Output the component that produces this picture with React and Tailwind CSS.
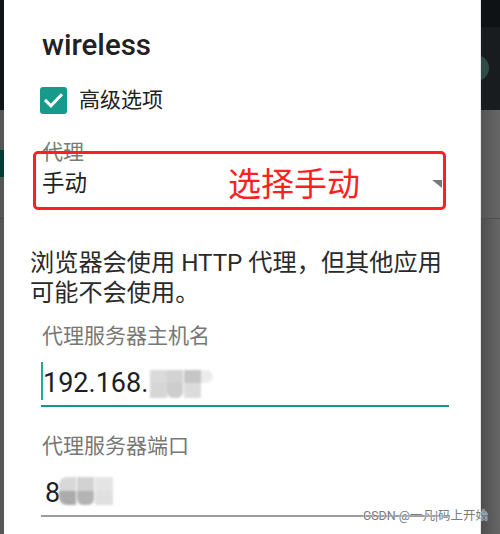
import React from "react";

const cjk = { fontFamily: 'Roboto, "Noto Sans CJK SC", sans-serif' };

export default function App() {
  return (
    <div className="relative flex h-[534px] w-[500px] overflow-hidden bg-white" style={cjk}>
      {/* left edge of the underlying screen */}
      <div className="flex w-[4px] flex-col">
        <div className="h-[110px] bg-[#111417]" />
        <div className="h-[40px] bg-[#565656]" />
        <div className="h-[27px] bg-[#003c35]" />
        <div className="h-[41px] bg-[#565656]" />
        <div className="h-[1px] bg-[#4a4a4a]" />
        <div className="flex-1 bg-[#565656]" />
      </div>

      {/* dialog */}
      <div className="relative flex w-[476px] flex-col bg-white">
        <div className="mt-[31px] pl-[38px] text-[29.5px] font-medium leading-[28px] text-[#212121]">wireless</div>

        <div className="mt-[28px] flex h-[27px] items-center pl-[36px]">
          <div className="flex h-[27px] w-[27px] items-center justify-center rounded-[3px] bg-[#17998b]">
            <svg width="21" height="21" viewBox="0 0 24 24" fill="none">
              <path d="M3.5 12.5l5.5 5.5L20.5 6" stroke="white" strokeWidth="3.4" strokeLinecap="square" />
            </svg>
          </div>
          <span className="ml-[12px] text-[21px] leading-[21px] text-[#222]">高级选项</span>
        </div>

        <div className="mt-[28px] pl-[38px] text-[21px] leading-[21px] text-[#7a7a7a]">代理</div>
        <div className="mt-[9px] flex items-center justify-between pl-[38px] pr-[38px]">
          <span className="text-[22.5px] leading-[22px] text-[#222]">手动</span>
          <svg width="10" height="8" viewBox="0 0 10 8" className="mt-[2px]">
            <path d="M0 0H10V0L10 8Z" fill="#7a7a7a" />
          </svg>
        </div>

        <p className="mt-[54px] w-[450px] pl-[26px] text-[24.2px] leading-[30px] text-[#2a2a2a]">
          浏览器会使用 HTTP 代理，但其他应用可能不会使用。
        </p>

        <div className="mt-[18px] pl-[38px] text-[21px] leading-[21px] text-[#777]">代理服务器主机名</div>
        <div className="relative ml-[37px] mt-[13px] flex h-[47px] w-[408px] items-start border-b-[2px] border-[#12998a]">
          <div className="mt-[2px] h-[38px] w-[2px] bg-[#2aa596]" />
          <span className="mt-[10px] text-[27px] leading-[27px] text-[#1e1e1e]">192.168.</span>
          <div className="absolute left-[109px] top-[10px] grid grid-cols-4 blur-[1px]">
            <div className="h-[13px] w-[17px] bg-[#dadada]" />
            <div className="h-[13px] w-[16px] bg-[#d2d2d2]" />
            <div className="h-[13px] w-[17px] bg-[#c6c6c6]" />
            <div className="h-[13px] w-[12px] rounded-r-full bg-[#ececec]" />
            <div className="h-[15px] w-[17px] bg-[#d6d6d6]" />
            <div className="h-[15px] w-[16px] rounded-b-[6px] bg-[#cdcdcd]" />
            <div className="h-[15px] w-[17px] bg-[#dcdcdc]" />
            <div className="h-[15px] w-[12px] bg-transparent" />
          </div>
        </div>

        <div className="mt-[29px] pl-[38px] text-[21px] leading-[21px] text-[#777]">代理服务器端口</div>
        <div className="relative ml-[37px] mt-[23px] flex h-[37px] w-[408px] items-start border-b-[2px] border-[#9c9c9c]">
          <span className="pl-[4px] text-[27px] leading-[27px] text-[#1e1e1e]">8</span>
          <div className="absolute left-[18px] top-[-3px] grid grid-cols-3 blur-[0.8px]">
            <div className="h-[14px] w-[17px] rounded-tl-[8px] bg-[#d8d8d8]" />
            <div className="h-[14px] w-[17px] bg-[#d2d2d2]" />
            <div className="h-[14px] w-[18px] bg-[#e4e4e4]" />
            <div className="h-[14px] w-[17px] rounded-bl-[8px] bg-[#ababab]" />
            <div className="h-[14px] w-[17px] rounded-b-[6px] bg-[#b4b4b4]" />
            <div className="h-[14px] w-[18px] bg-[#e0e0e0]" />
          </div>
        </div>

        {/* annotation */}
        <div className="absolute left-[29px] top-[151px] h-[59px] w-[413px] rounded-[5px] border-[3px] border-[#ff2121]" />
        <div className="absolute left-[224px] top-[166px] text-[33px] leading-[38px] text-[#ff2121]">选择手动</div>
      </div>

      {/* right edge of the underlying screen */}
      <div className="flex flex-1 flex-col border-l border-[#e8e8e8]">
        <div className="h-[27px] bg-[#0f1214]" />
        <div className="relative h-[83px] overflow-hidden bg-[#181c1f]">
          <div className="absolute left-[-18px] top-[28px] h-[26px] w-[26px] rounded-full bg-[#2e4c46]" />
        </div>
        <div className="h-[108px] bg-gradient-to-r from-[#555] to-[#666]" />
        <div className="h-[1px] bg-[#4f4f4f]" />
        <div className="flex-1 bg-gradient-to-r from-[#4e4e4e] to-[#666]" />
      </div>

      <div
        className="absolute left-[363px] top-[509px] text-[12.5px] leading-[14px] text-[#7a7a7a]"
        style={{ textShadow: "0 0 1px #fff, 0 0 1px #fff" }}
      >
        CSDN @一凡|码上开始
      </div>
    </div>
  );
}
